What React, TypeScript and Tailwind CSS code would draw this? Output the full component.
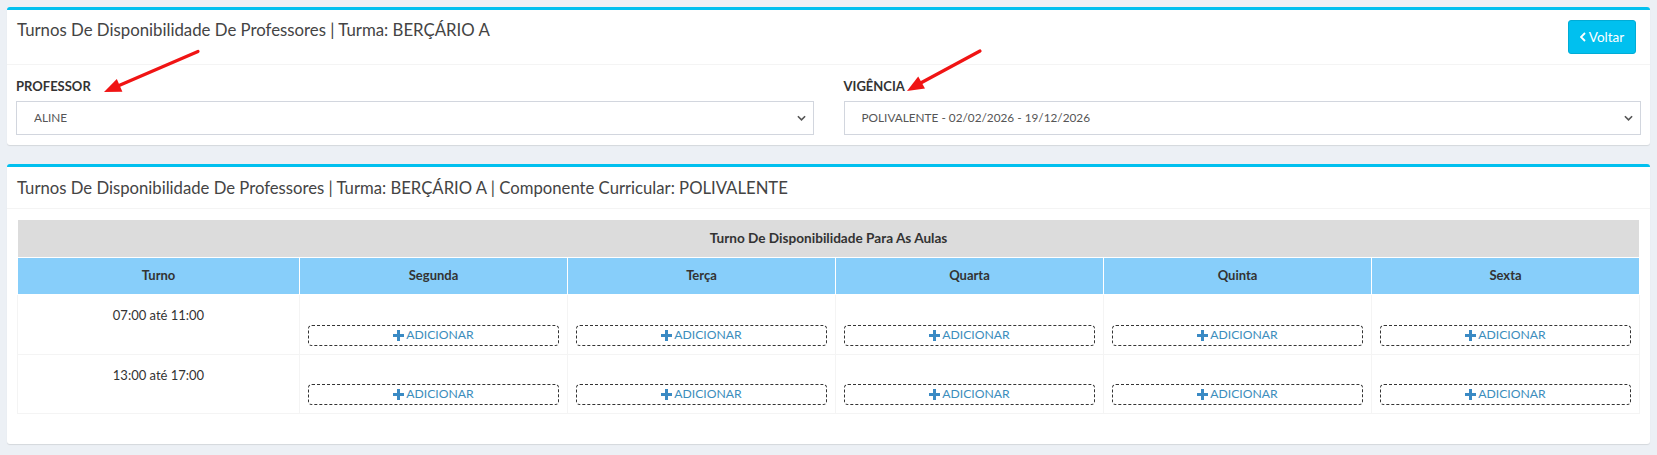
import React from 'react';

const days = ['Segunda', 'Terça', 'Quarta', 'Quinta', 'Sexta'];
const turnos = ['07:00 até 11:00', '13:00 até 17:00'];

const PlusIcon = () => (
  <svg viewBox="0 0 11 11" className="w-[11px] h-[11px]" fill="#3a8ac4">
    <rect x="4" y="0" width="3" height="11" />
    <rect x="0" y="4" width="11" height="3" />
  </svg>
);

const SelectChevron = () => (
  <svg
    viewBox="0 0 10 6"
    className="absolute right-[8px] top-1/2 -translate-y-1/2 w-[9px] h-[6px] pointer-events-none"
    fill="none"
    stroke="#555"
    strokeWidth="1.8"
  >
    <polyline points="1,1 5,5 9,1" />
  </svg>
);

const FieldSelect = ({ label, value }: { label: string; value: string }) => (
  <div>
    <label className="block text-[13px] leading-[20px] font-bold text-[#333] mb-[5px]">{label}</label>
    <div className="relative">
      <select
        defaultValue={value}
        className="w-full h-[34px] appearance-none bg-white border border-[#d2d6de] pl-[17px] text-[11.8px] text-[#555] outline-none"
      >
        <option>{value}</option>
      </select>
      <SelectChevron />
    </div>
  </div>
);

const Arrow = ({ tail, tip, a, b }: { tail: [number, number]; tip: [number, number]; a: [number, number]; b: [number, number] }) => {
  const base: [number, number] = [(a[0] + b[0]) / 2, (a[1] + b[1]) / 2];
  return (
    <g>
      <line x1={tail[0]} y1={tail[1]} x2={base[0]} y2={base[1]} stroke="#f01414" strokeWidth="3.2" strokeLinecap="round" />
      <polygon points={`${tip[0]},${tip[1]} ${a[0]},${a[1]} ${b[0]},${b[1]}`} fill="#f01414" />
    </g>
  );
};

const App: React.FC = () => {
  return (
    <div className="relative min-h-[455px] bg-[#ecf0f5] px-[7px] pt-[7px] pb-[12px] [font-family:Lato,sans-serif] text-[#333]">
      {/* Filtros */}
      <div className="bg-white rounded-[3px] border-t-[3px] border-[#00c0ef] shadow-[0_1px_1px_rgba(0,0,0,0.1)]">
        <div className="flex items-start justify-between pl-[10px] pr-[14px] py-[10px] border-b border-[#f4f4f4]">
          <h3 className="text-[16.8px] leading-[20px] text-[#444]">
            Turnos De Disponibilidade De Professores | Turma: BERÇÁRIO A
          </h3>
          <button className="h-[34px] w-[68px] flex items-center justify-center gap-[3px] rounded-[3px] bg-[#00c0ef] border border-[#00acd6] text-white text-[13.5px]">
            <svg viewBox="0 0 6 10" className="w-[6px] h-[10px]" fill="none" stroke="white" strokeWidth="1.8">
              <polyline points="5,1 1,5 5,9" />
            </svg>
            Voltar
          </button>
        </div>
        <div className="grid grid-cols-2 gap-[30px] px-[9px] pt-[11px] pb-[10px]">
          <FieldSelect label="PROFESSOR" value="ALINE" />
          <FieldSelect label="VIGÊNCIA" value="POLIVALENTE - 02/02/2026 - 19/12/2026" />
        </div>
      </div>

      {/* Quadro de turnos */}
      <div className="mt-[19px] bg-white rounded-[3px] border-t-[3px] border-[#00c0ef] shadow-[0_1px_1px_rgba(0,0,0,0.1)]">
        <div className="px-[10px] pt-[11px] pb-[10px] border-b border-[#f4f4f4]">
          <h3 className="text-[16.7px] leading-[20px] text-[#444]">
            Turnos De Disponibilidade De Professores | Turma: BERÇÁRIO A | Componente Curricular: POLIVALENTE
          </h3>
        </div>
        <div className="p-[10px]">
          <table className="w-full table-fixed border-collapse border border-[#f4f4f4] mb-[20px]">
            <colgroup>
              <col className="w-[282px]" />
              {days.map((d) => (
                <col key={d} />
              ))}
            </colgroup>
            <thead>
              <tr>
                <th colSpan={6} className="h-[38px] bg-[#dcdcdc] border border-white text-[13.6px] font-bold text-[#333]">
                  Turno De Disponibilidade Para As Aulas
                </th>
              </tr>
              <tr>
                <th className="h-[37px] bg-[#87cefa] border border-white text-[13px] font-bold text-[#333]">Turno</th>
                {days.map((d) => (
                  <th key={d} className="h-[37px] bg-[#87cefa] border border-white text-[13px] font-bold text-[#333]">
                    {d}
                  </th>
                ))}
              </tr>
            </thead>
            <tbody>
              {turnos.map((t, i) => (
                <tr key={t} className={i === 0 ? 'h-[60px]' : 'h-[59px]'}>
                  <td className="align-top text-center pt-[10px] border border-[#f4f4f4] text-[13px] leading-[20px]">{t}</td>
                  {days.map((d) => (
                    <td key={d} className="align-bottom px-[8px] pb-[8px] border border-[#f4f4f4]">
                      <button className="w-full h-[21px] flex items-center justify-center gap-[2px] rounded-[4px] border border-dashed border-[#333] text-[12.2px] text-[#3c8dbc]">
                        <PlusIcon />
                        ADICIONAR
                      </button>
                    </td>
                  ))}
                </tr>
              ))}
            </tbody>
          </table>
        </div>
      </div>

      {/* Setas de anotação */}
      <svg className="absolute inset-0 w-full h-full pointer-events-none">
        <Arrow tail={[198, 51.5]} tip={[104, 92]} a={[116.8, 78.9]} b={[122.4, 91.7]} />
        <Arrow tail={[980, 51]} tip={[907, 91]} a={[918.2, 76.4]} b={[925, 88.6]} />
      </svg>
    </div>
  );
};

export default App;
